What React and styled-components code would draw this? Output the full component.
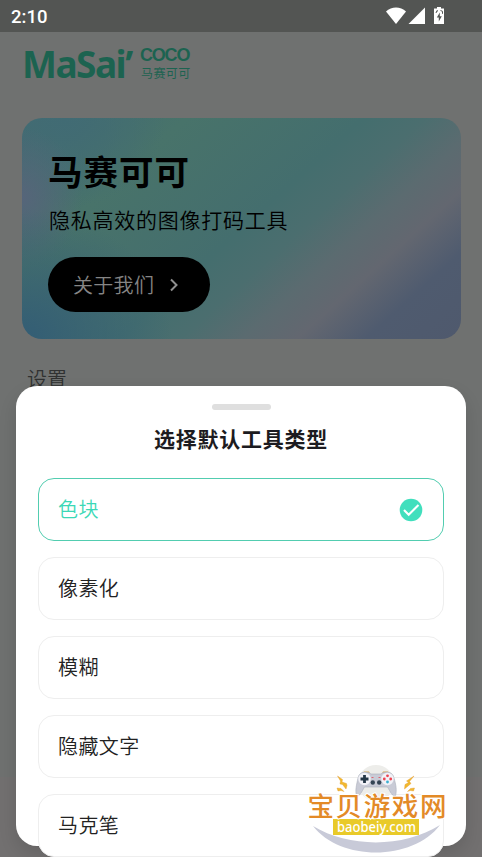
import React from 'react';
import styled, { createGlobalStyle } from 'styled-components';

const GlobalStyle = createGlobalStyle`
  * {
    box-sizing: border-box;
  }

  body {
    margin: 0;
    overflow: hidden;
    font-family: "Noto Sans CJK SC", sans-serif;
  }
`;

const Screen = styled.div`
  position: relative;
  width: 482px;
  height: 857px;
  overflow: hidden;
  display: flex;
  flex-direction: column;
  background: #6f7170;
`;

const StatusBar = styled.header`
  height: 32px;
  flex: none;
  display: flex;
  align-items: center;
  justify-content: space-between;
  padding: 0 36px 0 11px;
  background: #535553;
  color: #fff;
`;

const Clock = styled.span`
  padding-top: 1px;
  font-family: Roboto, sans-serif;
  font-size: 18.5px;
  font-weight: 500;
  line-height: 32px;
`;

const Brand = styled.div`
  height: 86px;
  flex: none;
  display: flex;
  gap: 6px;
  padding: 12px 0 0 22px;
  color: #1c6350;
`;

const BrandName = styled.div`
  width: 112px;
  font-family: "Noto Sans", sans-serif;
  font-size: 37px;
  font-weight: 700;
  line-height: 40px;
  letter-spacing: -1.5px;
  white-space: nowrap;
`;

const BrandSide = styled.div`
  display: flex;
  flex-direction: column;
  padding-top: 1px;

  b {
    font-family: "Liberation Sans", sans-serif;
    font-size: 18px;
    line-height: 20px;
    letter-spacing: -1.2px;
  }

  span {
    padding-left: 1px;
    font-size: 12px;
    font-weight: 400;
    line-height: 16px;
    letter-spacing: 0.4px;
  }
`;

const Card = styled.section`
  height: 221px;
  flex: none;
  margin: 0 21px 0 22px;
  padding: 30px 26px;
  border-radius: 20px;
  color: #000;
  background:
    radial-gradient(ellipse 150px 130px at 0% 100%, #335d75 0%, rgba(51, 93, 117, 0) 100%),
    radial-gradient(ellipse 60px 70px at 0% 36%, #56657a 0%, rgba(86, 101, 112, 0) 100%),
    radial-gradient(ellipse 100px 90px at 10% 0%, #416b74 0%, rgba(65, 107, 116, 0) 100%),
    linear-gradient(138deg, #426b72 0%, #48736a 24%, #446e6e 50%, #4b6e6f 59%, #5b6b70 68%, #636770 76%, #4f5b6f 86%, #4f596d 100%);
`;

const CardTitle = styled.h1`
  margin: 0;
  font-size: 34.5px;
  font-weight: 700;
  line-height: 44px;
  letter-spacing: 1px;
`;

const CardText = styled.p`
  margin: 11px 0 0;
  padding-left: 1px;
  font-size: 21px;
  font-weight: 350;
  line-height: 32px;
  letter-spacing: 0.75px;
`;

const AboutButton = styled.button`
  width: 162px;
  height: 55px;
  margin-top: 22px;
  padding: 0 0 0 25px;
  display: flex;
  align-items: center;
  gap: 14px;
  border: 0;
  border-radius: 28px;
  background: #000;
  color: #858585;
  font-family: inherit;
  font-size: 20px;
  font-weight: 350;
  letter-spacing: 0.3px;
`;

const SectionLabel = styled.h2`
  margin: 25px 0 0 27px;
  font-size: 20px;
  font-weight: 350;
  line-height: 30px;
  color: #303131;
`;

const BottomNav = styled.div`
  height: 80px;
  flex: none;
  margin-top: auto;
  background: #727070;
`;

const Sheet = styled.div`
  position: absolute;
  left: 16px;
  right: 16px;
  bottom: 11px;
  height: 460px;
  padding: 18px 22px 0;
  display: flex;
  flex-direction: column;
  align-items: stretch;
  border-radius: 21px;
  background: #fff;
  box-shadow: 0 8px 18px rgba(0, 0, 0, 0.12);
`;

const Handle = styled.div`
  width: 59px;
  height: 6px;
  flex: none;
  align-self: center;
  border-radius: 3px;
  background: #dfdfdf;
`;

const SheetTitle = styled.h3`
  margin: 12px 0 23px;
  text-align: center;
  font-size: 21px;
  font-weight: 700;
  line-height: 33px;
  letter-spacing: 0.75px;
  color: #1c1b20;
`;

const OptionList = styled.div`
  display: flex;
  flex-direction: column;
  gap: 16px;
`;

const Option = styled.div`
  height: 63px;
  flex: none;
  display: flex;
  align-items: center;
  justify-content: space-between;
  padding: 0 20px 2px 19px;
  border: ${({ $active }) => ($active ? '1.5px solid #52cdb0' : '1.5px solid #eee')};
  border-radius: 16px;
  background: #fff;
  color: ${({ $active }) => ($active ? '#3bd8b6' : '#222')};
  font-size: 20px;
  font-weight: 350;
  letter-spacing: 0.4px;

  svg {
    margin-top: 2px;
  }
`;

const Watermark = styled.div`
  position: absolute;
  left: 306px;
  top: 762px;
  width: 144px;
  height: 95px;
`;

const options = ['色块', '像素化', '模糊', '隐藏文字', '马克笔'];

const StatusIcons = () => (
  <svg width="62" height="20" viewBox="384 6 62 20" fill="#fff">
    <path d="M386 11.5c5.500-5.300 14.500-5.300 20 0L396 24z" />
    <path d="M425 7.500V24H408.500z" />
    <path d="M437 7h4v1.500h3V24h-10V8.500h3z" />
    <path d="M439.800 12.500l-3 5h2v4l3-5.300h-2z" fill="#535553" />
    <path d="M436 13l1-2.500 1 .8M440.500 10.500l2 .8v2.500" fill="none" stroke="#535553" />
  </svg>
);

const Chevron = () => (
  <svg width="12" height="16" viewBox="0 0 12 16" fill="none" stroke="#909090" strokeWidth="2">
    <path d="M3 2.500l5.500 5.500L3 13.500" />
  </svg>
);

const CheckIcon = () => (
  <svg width="24" height="24" viewBox="0 0 24 24">
    <circle cx="12" cy="12" r="11.300" fill="#41dfbd" />
    <path d="M5 12l4.700 4.700L19.500 7" fill="none" stroke="#fff" strokeWidth="2.100" />
  </svg>
);

const SiteMark = () => (
  <Watermark>
    <svg width="144" height="95" viewBox="306 762 144 95">
      <circle cx="376" cy="783" r="18" fill="#ededea" />
      <path d="M313 826c36 22 91 22 127-1-27 36-99 37-127 1z" fill="#c8cad8" />
      <g fill="#f1b92e" stroke="#e2972f" strokeWidth=".4">
        <path d="M337.500 776l5 3.500-.5 2.500 4.500 1.500.5 2-1 3.500-3.500-4.500-2.500-.5.500-3z" />
        <path d="M414 776l-7.500 5 2 1.500-3.500 2-.5 4.500 6.500-5.500-1.500-2z" />
        <path d="M337 788l4 .5 3 3-3-1-3 .5z" />
        <path d="M414.500 788l-4 .5-3 3 3-1 3 .5z" />
      </g>
      <path d="M363 773.500l1-2h5l1 2zM382 773.500l1-2h5l1 2z" fill="#dda94a" />
      <path d="M358 778c1-7 10-7 13-4h10c3-3 12-3 13 4 2 7 3 12 1.500 18-3 1-5-4-8-9h-23c-3 5-5 10-8 9-1.500-6 0-11 1.500-18z" fill="#c9cbd6" stroke="#aaaebb" strokeWidth=".6" />
      <circle cx="364.500" cy="779" r="6.200" fill="#f2f2f7" />
      <circle cx="387.500" cy="779" r="6.200" fill="#f2f2f7" />
      <path d="M364.500 775v8M360.500 779h8" stroke="#253746" strokeWidth="2.800" />
      <circle cx="387.500" cy="775.800" r="1.400" fill="#ed4451" />
      <circle cx="387.500" cy="782" r="1.400" fill="#3bafd0" />
      <circle cx="384.300" cy="779" r="1.400" fill="#ed4451" />
      <circle cx="390.700" cy="779" r="1.400" fill="#ed4451" />
      <circle cx="372.800" cy="782.500" r="2.200" fill="#354554" />
      <circle cx="379.200" cy="782.500" r="2.200" fill="#354554" />
      <path d="M371.500 777.500h2M378.500 777.500h2" stroke="#df6570" />
      <rect x="333" y="819" width="86" height="16" fill="#e9ca29" />
      <text
        x="307.500"
        y="815.500"
        fontSize="26.500"
        fontWeight="500"
        letterSpacing="1.600"
        fill="#e38a27"
        stroke="#fff"
        strokeWidth="2"
        paintOrder="stroke"
      >
        宝贝游戏网
      </text>
      <text
        x="337"
        y="831.500"
        fontFamily="Noto Sans"
        fontSize="13.500"
        fontWeight="500"
        textLength="79"
        lengthAdjust="spacingAndGlyphs"
        fill="#fff"
      >
        baobeiy.com
      </text>
    </svg>
  </Watermark>
);

const App = () => {
  return (
    <>
      <GlobalStyle />
      <Screen>
        <StatusBar>
          <Clock>2:10</Clock>
          <StatusIcons />
        </StatusBar>
        <Brand>
          <BrandName>MaSai’</BrandName>
          <BrandSide>
            <b>COCO</b>
            <span>马赛可可</span>
          </BrandSide>
        </Brand>
        <Card>
          <CardTitle>马赛可可</CardTitle>
          <CardText>隐私高效的图像打码工具</CardText>
          <AboutButton>
            关于我们
            <Chevron />
          </AboutButton>
        </Card>
        <SectionLabel>设置</SectionLabel>
        <BottomNav />
        <Sheet>
          <Handle />
          <SheetTitle>选择默认工具类型</SheetTitle>
          <OptionList>
            {options.map((name, index) => (
              <Option key={name} $active={index === 0}>
                {name}
                {index === 0 && <CheckIcon />}
              </Option>
            ))}
          </OptionList>
        </Sheet>
        <SiteMark />
      </Screen>
    </>
  );
};

export default App;
